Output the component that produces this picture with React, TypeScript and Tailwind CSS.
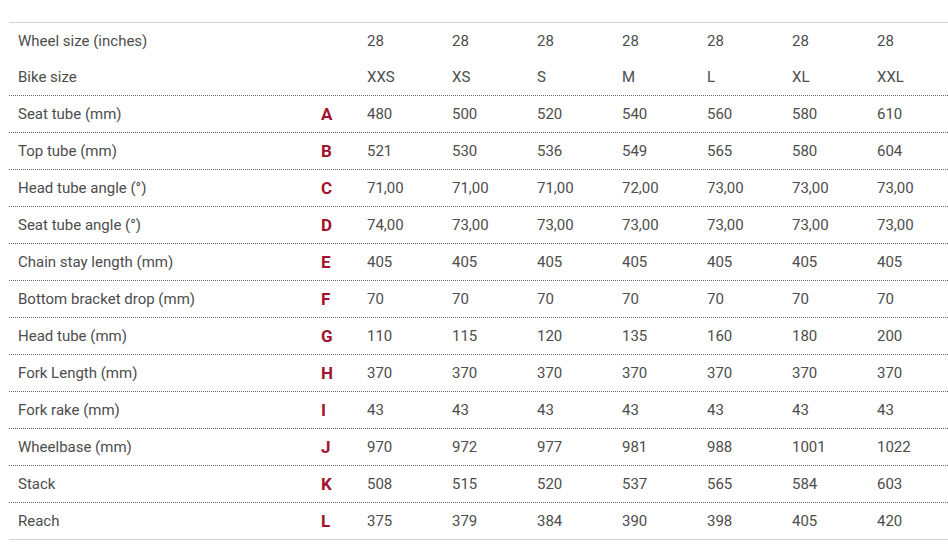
const sizes = ["XXS", "XS", "S", "M", "L", "XL", "XXL"];

const rows: { label: string; letter: string; values: string[] }[] = [
  { label: "Seat tube (mm)", letter: "A", values: ["480", "500", "520", "540", "560", "580", "610"] },
  { label: "Top tube (mm)", letter: "B", values: ["521", "530", "536", "549", "565", "580", "604"] },
  { label: "Head tube angle (°)", letter: "C", values: ["71,00", "71,00", "71,00", "72,00", "73,00", "73,00", "73,00"] },
  { label: "Seat tube angle (°)", letter: "D", values: ["74,00", "73,00", "73,00", "73,00", "73,00", "73,00", "73,00"] },
  { label: "Chain stay length (mm)", letter: "E", values: ["405", "405", "405", "405", "405", "405", "405"] },
  { label: "Bottom bracket drop (mm)", letter: "F", values: ["70", "70", "70", "70", "70", "70", "70"] },
  { label: "Head tube (mm)", letter: "G", values: ["110", "115", "120", "135", "160", "180", "200"] },
  { label: "Fork Length (mm)", letter: "H", values: ["370", "370", "370", "370", "370", "370", "370"] },
  { label: "Fork rake (mm)", letter: "I", values: ["43", "43", "43", "43", "43", "43", "43"] },
  { label: "Wheelbase (mm)", letter: "J", values: ["970", "972", "977", "981", "988", "1001", "1022"] },
  { label: "Stack", letter: "K", values: ["508", "515", "520", "537", "565", "584", "603"] },
  { label: "Reach", letter: "L", values: ["375", "379", "384", "390", "398", "405", "420"] },
];

const grid = "grid grid-cols-[301px_48px_repeat(7,85px)] items-center";

export default function App() {
  return (
    <div className="w-[948px] h-[550px] bg-white overflow-hidden pl-[9px] pt-[22px] font-['Roboto',sans-serif] text-[15px] text-[#4d4d4d]">
      <div className="border-t border-[#d0d0d0]">
        <div className={`${grid} h-[36px]`}>
          <div className="pl-[9px]">Wheel size (inches)</div>
          <div />
          {sizes.map((s) => (
            <div key={s} className="pl-[9px]">28</div>
          ))}
        </div>
        <div className={`${grid} h-[37px] border-b border-dotted border-[#666]`}>
          <div className="pl-[9px]">Bike size</div>
          <div />
          {sizes.map((s) => (
            <div key={s} className="pl-[9px]">{s}</div>
          ))}
        </div>
        {rows.map((r, i) => (
          <div
            key={r.letter}
            className={`${grid} h-[37px] border-b ${
              i === rows.length - 1 ? "border-solid border-[#d0d0d0]" : "border-dotted border-[#666]"
            }`}
          >
            <div className="pl-[9px]">{r.label}</div>
            <div className="pl-[11px] text-[17px] font-bold text-[#a3132d] pt-[2px]">{r.letter}</div>
            {r.values.map((v, j) => (
              <div key={j} className="pl-[9px]">{v}</div>
            ))}
          </div>
        ))}
      </div>
    </div>
  );
}
